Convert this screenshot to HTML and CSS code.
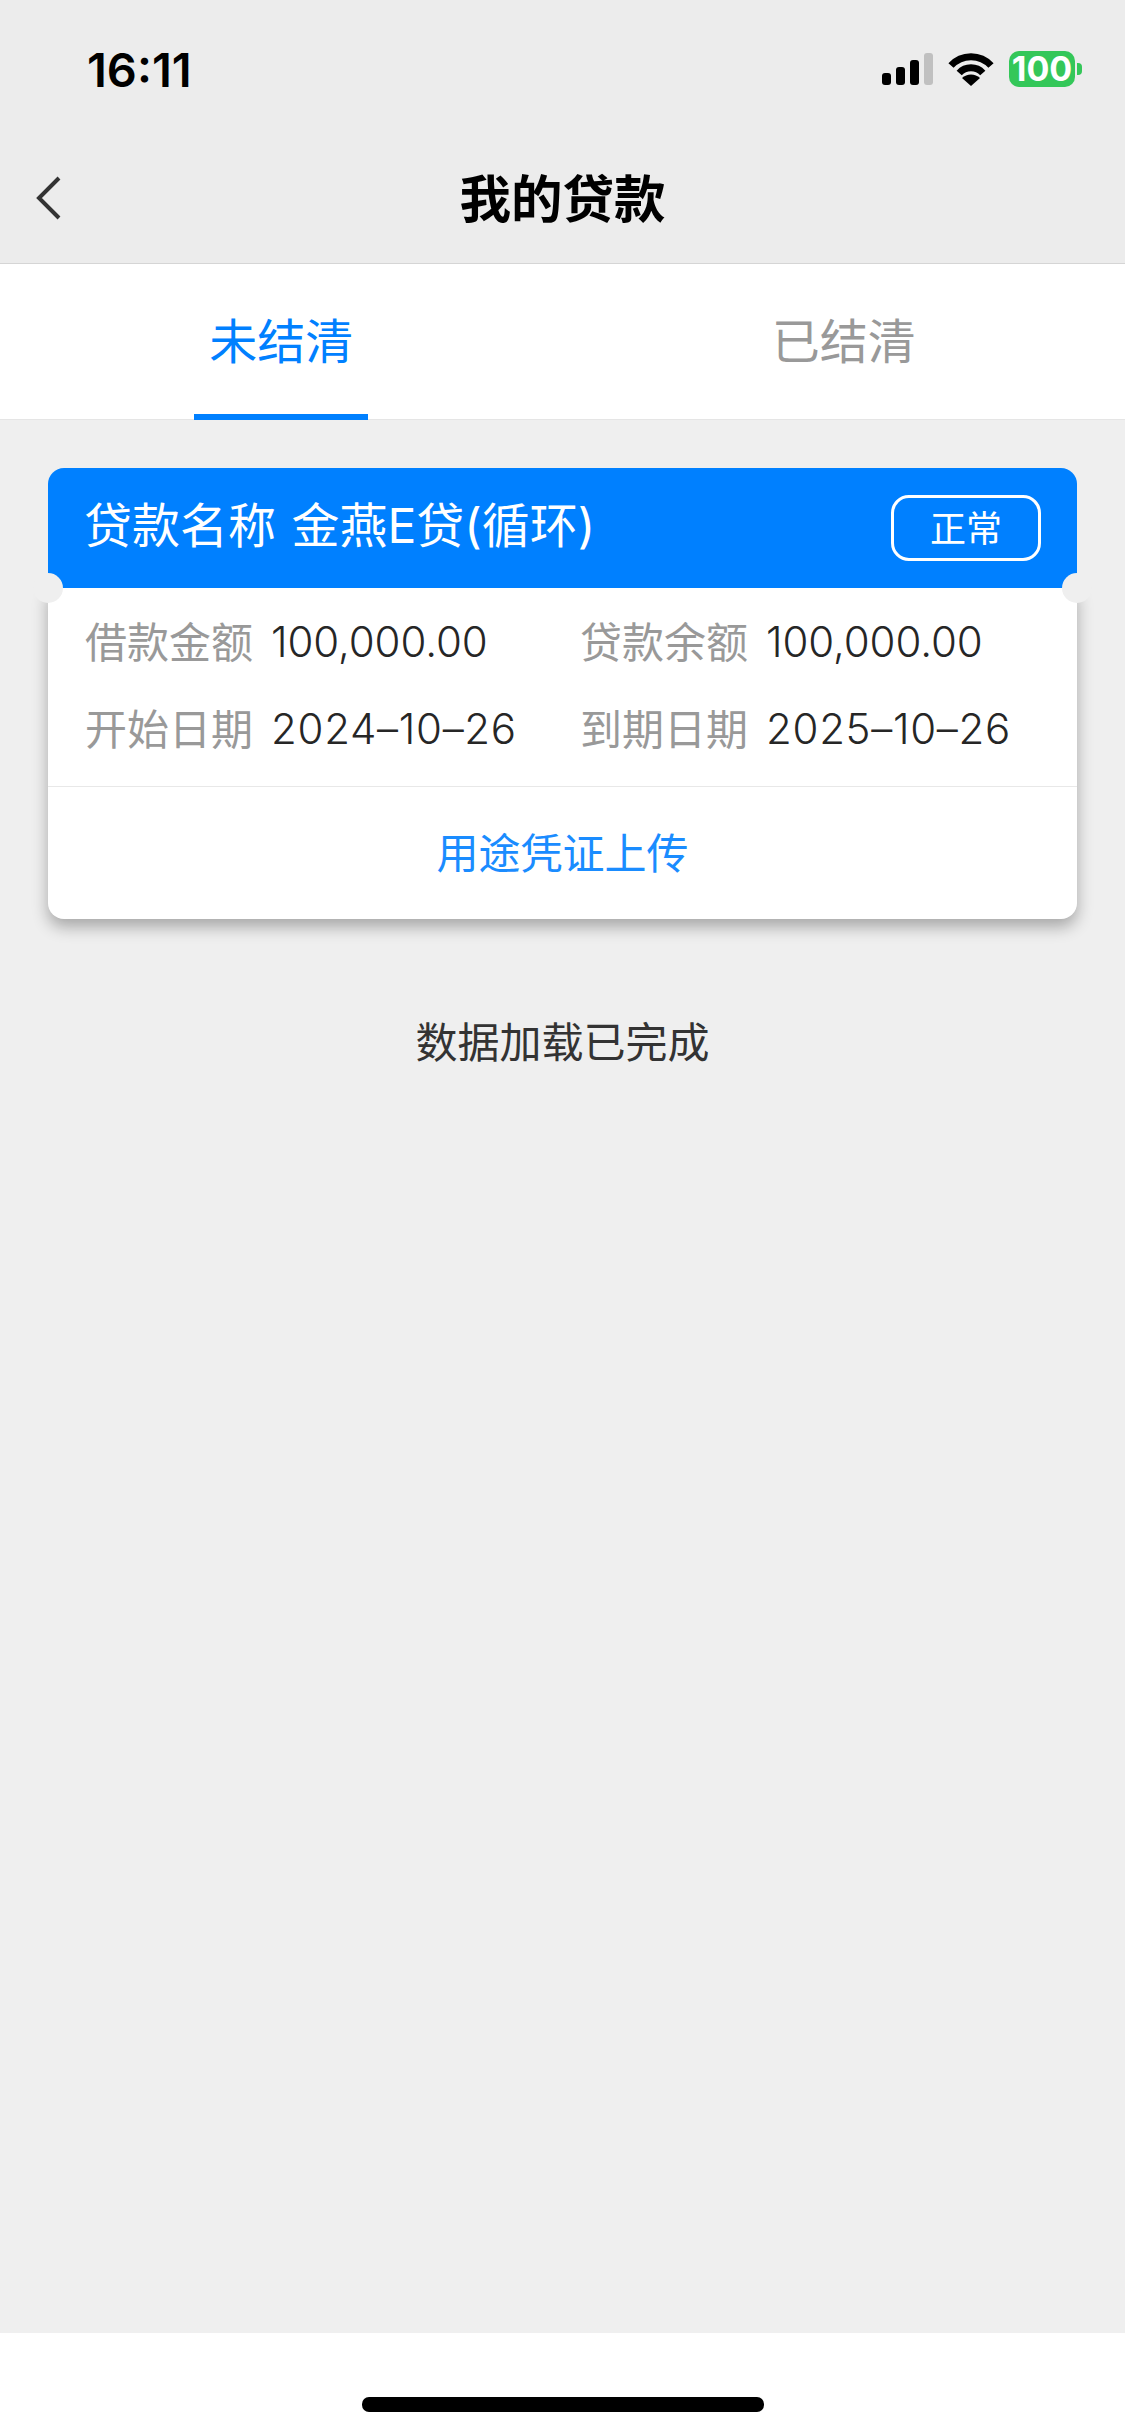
FILE: index.html
```html
<!DOCTYPE html>
<html lang="zh-CN">

<head>
    <meta charset="UTF-8">
    <meta name="viewport" content="width=device-width, initial-scale=1.0">
    <title>我的贷款</title>
    <link rel="stylesheet" href="styles.css">
</head>

<body>
    <!-- Status bar and title -->
    <header class="top">
        <div class="status">
            <span class="time">16:11</span>
            <div class="status-icons">
                <div class="signal">
                    <i class="bar bar1"></i>
                    <i class="bar bar2"></i>
                    <i class="bar bar3"></i>
                    <i class="bar bar4"></i>
                </div>
                <svg class="wifi" width="46" height="33" viewBox="0 0 46 33">
                    <path d="M3 12.5A27 27 0 0 1 43 12.5" fill="none" stroke="#000" stroke-width="7" />
                    <path d="M11.2 20A16 16 0 0 1 34.8 20" fill="none" stroke="#000" stroke-width="7" />
                    <path d="M23 33L14 25A13 13 0 0 1 32 25Z" fill="#000" />
                </svg>
                <div class="battery">
                    <span class="battery-body">100</span>
                    <i class="battery-nub"></i>
                </div>
            </div>
        </div>
        <nav class="nav">
            <svg class="back" width="28" height="46" viewBox="0 0 28 46">
                <path d="M25 3L5 23L25 43" fill="none" stroke="#333" stroke-width="4" />
            </svg>
            <h1>我的贷款</h1>
        </nav>
    </header>

    <!-- Tabs -->
    <div class="tabs">
        <div class="tab active">未结清</div>
        <div class="tab">已结清</div>
    </div>

    <main class="content">
        <section class="card">
            <div class="card-head">
                <span class="card-title">贷款名称 金燕E贷(循环)</span>
                <span class="badge">正常</span>
            </div>
            <div class="card-body">
                <div class="card-info">
                    <div class="field"><span class="label">借款金额</span><span class="value">100,000.00</span></div>
                    <div class="field"><span class="label">贷款余额</span><span class="value">100,000.00</span></div>
                    <div class="field"><span class="label">开始日期</span><span class="value date">2024–10–26</span></div>
                    <div class="field"><span class="label">到期日期</span><span class="value date">2025–10–26</span></div>
                </div>
                <div class="card-link">用途凭证上传</div>
            </div>
            <i class="notch notch-left"></i>
            <i class="notch notch-right"></i>
        </section>
        <p class="done">数据加载已完成</p>
    </main>

    <footer class="home">
        <i class="home-bar"></i>
    </footer>
</body>

</html>
```

FILE: styles.css
```css
* {
    box-sizing: border-box;
}

body {
    margin: 0;
    width: 1125px;
    height: 2436px;
    display: flex;
    flex-direction: column;
    font-family: Inter, "Noto Sans CJK SC", sans-serif;
    background-color: #efefef;
    color: #222;
}

i {
    display: block;
}

/* Top bar */
.top {
    height: 264px;
    background-color: #ececec;
    border-bottom: 1px solid #d5d5d5;
}

.status {
    height: 138px;
    display: flex;
    justify-content: space-between;
    align-items: center;
    padding: 0 43px 0 87px;
}

.time {
    font-size: 47px;
    font-weight: 600;
    color: #000;
}

.status-icons {
    display: flex;
    align-items: center;
    gap: 15px;
}

.signal {
    display: flex;
    align-items: flex-end;
    gap: 5px;
    height: 32px;
}

.bar {
    width: 9px;
    background-color: #000;
    border-radius: 3px;
}

.bar1 { height: 12px; }
.bar2 { height: 18px; }
.bar3 { height: 25px; }
.bar4 { height: 32px; background-color: #c0c0c0; }

.battery {
    display: flex;
    align-items: center;
    gap: 2px;
}

.battery-body {
    width: 66px;
    height: 36px;
    line-height: 36px;
    text-align: center;
    font-size: 34px;
    font-weight: 700;
    color: #fff;
    background-color: #34c759;
    border-radius: 10px;
}

.battery-nub {
    width: 5px;
    height: 12px;
    background-color: #34c759;
    border-radius: 0 4px 4px 0;
}

.nav {
    position: relative;
    height: 120px;
    display: flex;
    justify-content: center;
    align-items: center;
    padding-bottom: 6px;
}

.nav h1 {
    margin: 0;
    font-size: 51.5px;
    font-weight: 700;
    color: #000;
}

.back {
    position: absolute;
    left: 34px;
    top: 37px;
}

/* Tabs */
.tabs {
    height: 156px;
    display: flex;
    background-color: #fff;
    border-bottom: 1px solid #e5e5e5;
}

.tab {
    position: relative;
    flex: 1;
    display: flex;
    justify-content: center;
    align-items: center;
    padding-bottom: 8px;
    font-size: 48px;
    color: #999;
}

.tab.active {
    color: #0080ff;
}

.tab.active::after {
    content: "";
    position: absolute;
    left: 194px;
    bottom: -1px;
    width: 174px;
    height: 6px;
    background-color: #0080ff;
}

/* Card */
.content {
    flex: 1;
    padding: 48px 48px 0;
}

.card {
    position: relative;
}

.card-head {
    position: relative;
    z-index: 1;
    height: 120px;
    display: flex;
    justify-content: space-between;
    align-items: center;
    padding: 0 36px;
    background-color: #0080ff;
    border-radius: 16px 16px 0 0;
    color: #fff;
}

.card-title {
    font-size: 48px;
    word-spacing: 2px;
    margin-top: -12px;
}

.badge {
    width: 150px;
    height: 66px;
    display: flex;
    justify-content: center;
    align-items: center;
    padding-bottom: 5px;
    border: 3px solid #fff;
    border-radius: 18px;
    font-size: 36px;
}

.card-body {
    background-color: #fff;
    border-radius: 0 0 16px 16px;
    box-shadow: 0 8px 16px rgba(0, 0, 0, 0.3);
}

.notch {
    position: absolute;
    z-index: 2;
    top: 105px;
    width: 30px;
    height: 30px;
    border-radius: 50%;
    background-color: #efefef;
}

.notch-left { left: -15px; }
.notch-right { right: -15px; }

.card-info {
    height: 199px;
    display: grid;
    grid-template-columns: 495px 1fr;
    grid-auto-rows: 87px;
    padding: 10px 0 0 37px;
    border-bottom: 1px solid #e8e8e8;
}

.field {
    display: flex;
    align-items: center;
    gap: 18px;
    font-size: 42px;
}

.label {
    padding-bottom: 4px;
    color: #999;
}

.value {
    font-weight: 350;
    letter-spacing: -0.1px;
    color: #262626;
}

.value.date {
    letter-spacing: 0.7px;
}

.card-link {
    height: 132px;
    display: flex;
    justify-content: center;
    align-items: center;
    padding-bottom: 6px;
    font-size: 42px;
    color: #1a8cff;
}

.done {
    margin: 90px 0 0;
    text-align: center;
    font-size: 42px;
    color: #333;
}

/* Home indicator */
.home {
    height: 103px;
    padding-top: 64px;
    background-color: #fff;
}

.home-bar {
    width: 402px;
    height: 15px;
    margin: 0 auto;
    background-color: #000;
    border-radius: 7px;
}
```
